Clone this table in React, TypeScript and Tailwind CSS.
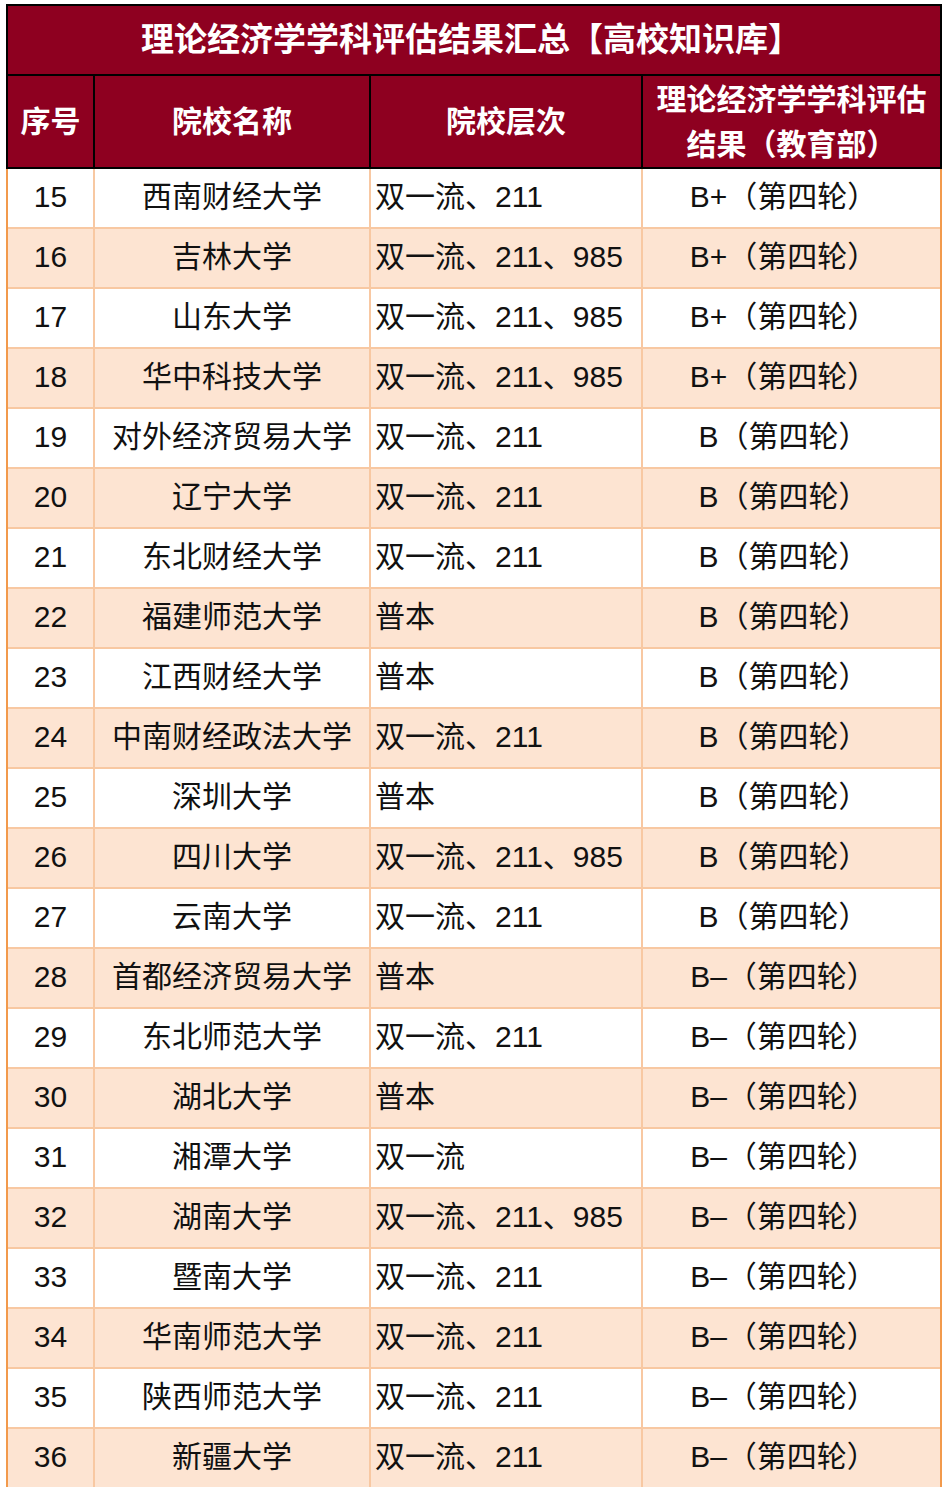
const rows = [
  { no: 15, name: "西南财经大学", level: "双一流、211", result: "B+（第四轮）" },
  { no: 16, name: "吉林大学", level: "双一流、211、985", result: "B+（第四轮）" },
  { no: 17, name: "山东大学", level: "双一流、211、985", result: "B+（第四轮）" },
  { no: 18, name: "华中科技大学", level: "双一流、211、985", result: "B+（第四轮）" },
  { no: 19, name: "对外经济贸易大学", level: "双一流、211", result: "B（第四轮）" },
  { no: 20, name: "辽宁大学", level: "双一流、211", result: "B（第四轮）" },
  { no: 21, name: "东北财经大学", level: "双一流、211", result: "B（第四轮）" },
  { no: 22, name: "福建师范大学", level: "普本", result: "B（第四轮）" },
  { no: 23, name: "江西财经大学", level: "普本", result: "B（第四轮）" },
  { no: 24, name: "中南财经政法大学", level: "双一流、211", result: "B（第四轮）" },
  { no: 25, name: "深圳大学", level: "普本", result: "B（第四轮）" },
  { no: 26, name: "四川大学", level: "双一流、211、985", result: "B（第四轮）" },
  { no: 27, name: "云南大学", level: "双一流、211", result: "B（第四轮）" },
  { no: 28, name: "首都经济贸易大学", level: "普本", result: "B–（第四轮）" },
  { no: 29, name: "东北师范大学", level: "双一流、211", result: "B–（第四轮）" },
  { no: 30, name: "湖北大学", level: "普本", result: "B–（第四轮）" },
  { no: 31, name: "湘潭大学", level: "双一流", result: "B–（第四轮）" },
  { no: 32, name: "湖南大学", level: "双一流、211、985", result: "B–（第四轮）" },
  { no: 33, name: "暨南大学", level: "双一流、211", result: "B–（第四轮）" },
  { no: 34, name: "华南师范大学", level: "双一流、211", result: "B–（第四轮）" },
  { no: 35, name: "陕西师范大学", level: "双一流、211", result: "B–（第四轮）" },
  { no: 36, name: "新疆大学", level: "双一流、211", result: "B–（第四轮）" },
];

const cols = "grid grid-cols-[85px_276px_272px_299px]";

export default function App() {
  return (
    <div className="w-[950px] h-[1487px] overflow-hidden bg-white pl-[6px] pt-[4px] font-['Liberation_Sans','Noto_Sans_CJK_SC',sans-serif]">
      <div className="w-[936px]">
        {/* Title */}
        <div className="h-[72px] border-2 border-black bg-[#8e0020] flex items-center justify-center text-white font-bold text-[33px] pr-[6px]">
          理论经济学学科评估结果汇总【高校知识库】
        </div>

        {/* Header */}
        <div className={`${cols} h-[93px] border-x-2 border-b-2 border-black bg-[#8e0020] text-white font-bold text-[30px]`}>
          <div className="flex items-center justify-center">序号</div>
          <div className="flex items-center justify-center border-l-2 border-black">院校名称</div>
          <div className="flex items-center justify-center border-l-2 border-black">院校层次</div>
          <div className="flex flex-col items-center justify-center border-l-2 border-black leading-[45px]">
            <span>理论经济学学科评估</span>
            <span>结果（教育部）</span>
          </div>
        </div>

        {/* Body */}
        <div className="border-x-2 border-[#f29a4c]">
          {rows.map((r, i) => (
            <div
              key={r.no}
              className={`${cols} h-[60px] border-b-2 border-[#f8c8a2] text-[30px] text-[#111] ${i % 2 === 1 ? "bg-[#fde4d2]" : "bg-white"}`}
            >
              <div className="flex items-center justify-center pb-[3px]">{r.no}</div>
              <div className="flex items-center justify-center pb-[3px] border-l-2 border-[#f8c8a2] whitespace-nowrap">{r.name}</div>
              <div className="flex items-center pl-[4px] pb-[3px] border-l-2 border-[#f8c8a2] whitespace-nowrap">{r.level}</div>
              <div className="flex items-center justify-center pb-[3px] border-l-2 border-[#f8c8a2] whitespace-nowrap pr-[16px]">{r.result}</div>
            </div>
          ))}
        </div>
      </div>
    </div>
  );
}
